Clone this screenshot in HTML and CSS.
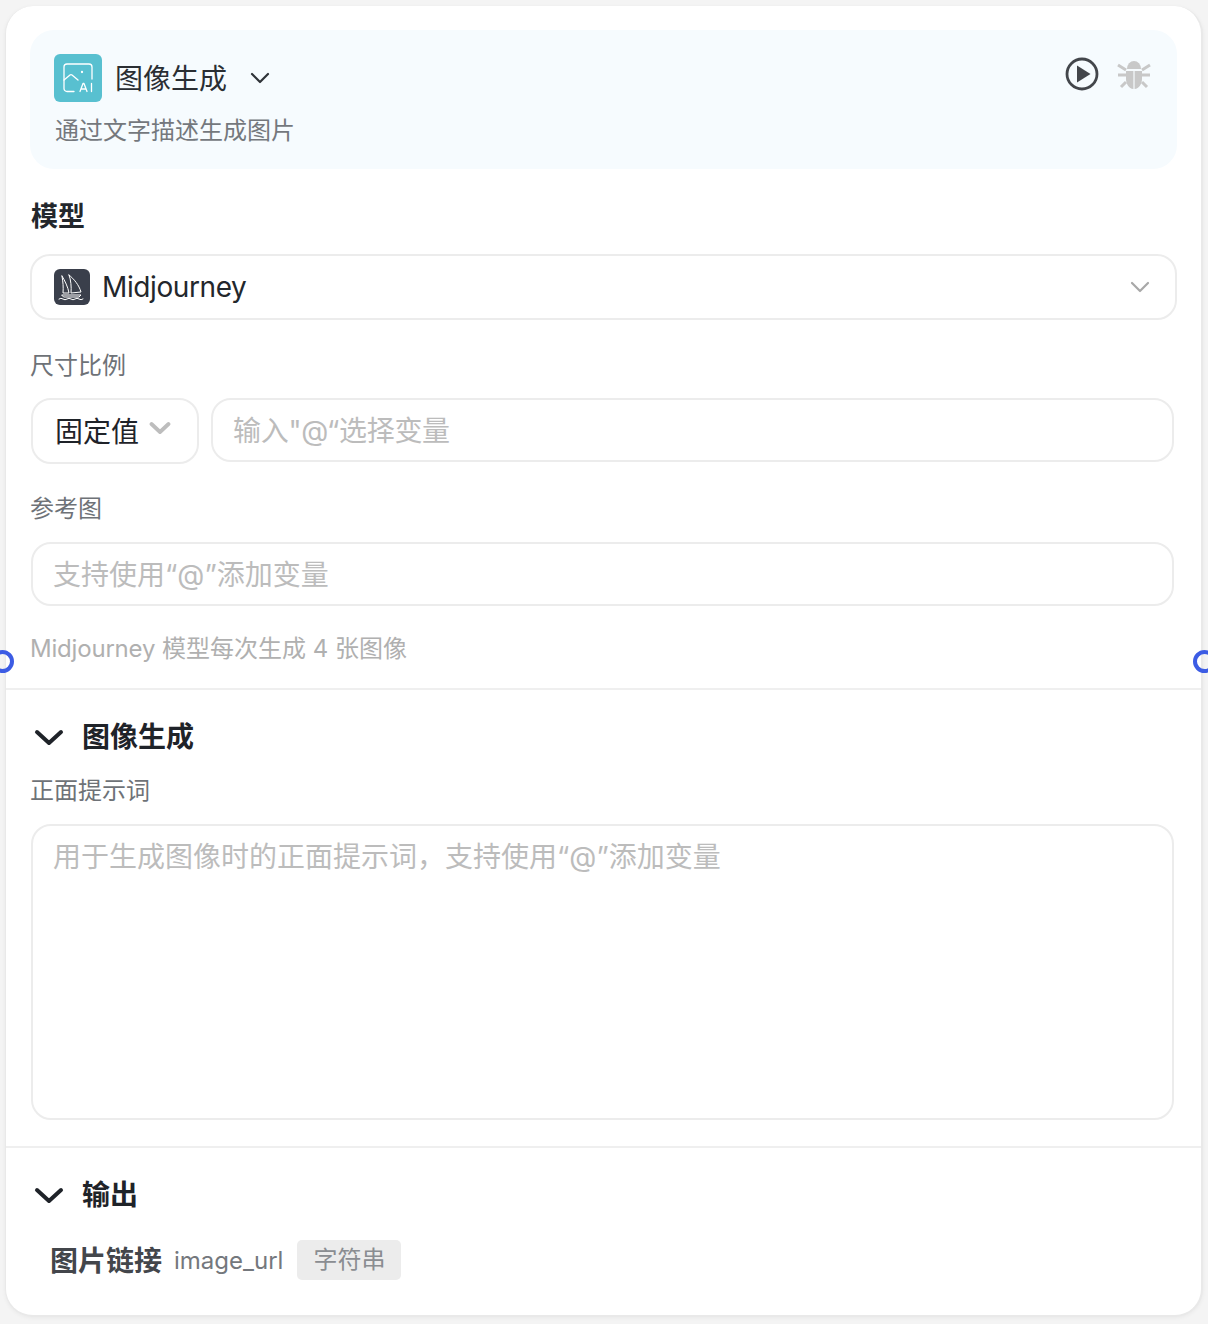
FILE: index.html
```html
<!DOCTYPE html>
<html lang="zh-CN">
<head>
<meta charset="utf-8">
<title>图像生成</title>
<link rel="stylesheet" href="styles.css">
</head>
<body>
<div class="card">
  <span class="handle handle-left"></span>
  <span class="handle handle-right"></span>
  <section class="top">
    <header class="head">
      <div class="head-main">
        <div class="head-title">
          <span class="node-icon">
            <svg width="30" height="30" viewBox="0 0 30 30" fill="none" stroke="#fff" stroke-width="1.300" stroke-linecap="round" stroke-linejoin="round">
              <path d="M11 28.500H4a3 3 0 0 1-3-3V4a3 3 0 0 1 3-3h22a3 3 0 0 1 3 3v12"/>
              <path d="M1 17l6-5q1-.7 2 0l6 5"/>
              <circle cx="19" cy="9" r=".5" fill="#fff"/>
              <path d="M17 28.500l3-8h1l3 8M18 26h5M28.500 20.500v8"/>
            </svg>
          </span>
          <span class="title">图像生成</span>
          <svg class="title-caret" width="20" height="20" viewBox="0 0 20 20" fill="none" stroke="#2f3338" stroke-width="2.200" stroke-linecap="round" stroke-linejoin="round"><path d="M2 6l8 8 8-8"/></svg>
        </div>
        <p class="desc">通过文字描述生成图片</p>
      </div>
      <div class="head-actions">
        <svg width="34" height="34" viewBox="0 0 34 34"><circle cx="17" cy="17" r="15" fill="none" stroke="#43464b" stroke-width="2.800"/><path d="M12 8.500v17l13.500-8.500z" fill="#43464b"/></svg>
        <svg width="34" height="34" viewBox="0 0 34 34" fill="#c8c8c8"><path d="M10 12a7 8 0 0 1 14 0z"/><path d="M9 14h7.400v18C12 31.500 9 27 9 22zM17.600 14H25v8c0 5-3 9.500-7.400 10z"/><path d="M1 8l8 5M33 8l-8 5M1 18h8M33 18h-8M4 30l5-5M30 30l-5-5" stroke="#c8c8c8" stroke-width="3" fill="none"/></svg>
      </div>
    </header>
    <h2 class="field-heading">模型</h2>
    <div class="select">
      <span class="model-icon">
        <svg width="36" height="36" viewBox="0 0 36 36" fill="none" stroke="#fff" stroke-width="1" stroke-linejoin="round" stroke-linecap="round">
          <path d="M8 7c3 5 6 11 7 17H9c.5-6 0-11-1-17z"/>
          <path d="M15 6c5 4 10 10 12 17l-10 1c.5-6 0-13-2-18z"/>
          <path d="M8 26h19l-2 2H10z"/>
          <path d="M5 30q2-1.500 4 0t4 0 4 0 4 0 4 0 4 0"/>
        </svg>
      </span>
      <span class="select-text">Midjourney</span>
      <svg class="select-caret" width="20" height="12" viewBox="0 0 20 12" fill="none" stroke="#a8a8a8" stroke-width="2.200" stroke-linecap="round" stroke-linejoin="round"><path d="M2 2l8 8 8-8"/></svg>
    </div>
    <label class="field-label ratio-label">尺寸比例</label>
    <div class="ratio-row">
      <div class="fixed-select">
        <span>固定值</span>
        <svg width="22" height="14" viewBox="0 0 22 14" fill="none" stroke="#bdbdbd" stroke-width="3.800" stroke-linecap="round" stroke-linejoin="round"><path d="M2.500 3l8.500 8 8.500-8"/></svg>
      </div>
      <div class="input grow">输入"@“选择变量</div>
    </div>
    <label class="field-label ref-label">参考图</label>
    <div class="input">支持使用“@”添加变量</div>
    <p class="hint"><span class="hint-latin">Midjourney</span> 模型每次生成 4 张图像</p>
  </section>
  <section class="section gen">
    <div class="section-head">
      <svg width="30" height="20" viewBox="0 0 30 20" fill="none" stroke="#1f2329" stroke-width="4" stroke-linecap="round" stroke-linejoin="round"><path d="M3 5l12 11L27 5"/></svg>
      <h3>图像生成</h3>
    </div>
    <label class="field-label prompt-label">正面提示词</label>
    <div class="input textarea">用于生成图像时的正面提示词，支持使用“@”添加变量</div>
  </section>
  <section class="section out">
    <div class="section-head">
      <svg width="30" height="20" viewBox="0 0 30 20" fill="none" stroke="#1f2329" stroke-width="4" stroke-linecap="round" stroke-linejoin="round"><path d="M3 5l12 11L27 5"/></svg>
      <h3>输出</h3>
    </div>
    <div class="output-row">
      <strong>图片链接</strong>
      <span class="var-name">image_url</span>
      <span class="tag">字符串</span>
    </div>
  </section>
</div>
</body>
</html>
```
FILE: styles.css
```css
* { box-sizing: border-box; }
html, body { margin: 0; padding: 0; }
body {
  width: 1208px;
  height: 1324px;
  overflow: hidden;
  background: #f4f4f4;
  padding: 6px 5px 0;
  font-family: Inter, "Noto Sans CJK SC", sans-serif;
  color: #1f2329;
}
h2, h3, p { margin: 0; }
.card {
  position: relative;
  width: 1198px;
  height: 1311px;
  background: #fff;
  border-radius: 28px;
  border: 1px solid #e9e9e9;
  border-width: 0 2px 2px 1px;
  box-shadow: 0 1px 4px rgba(0, 0, 0, .05);
}
.handle {
  position: absolute;
  top: 644px;
  width: 23px;
  height: 23px;
  border: 4px solid #3c5ce4;
  border-radius: 50%;
  background: transparent;
}
.handle-left { left: -15px; }
.handle-right { right: -15px; }
.top { padding: 24px 24px 0; height: 684px; border-bottom: 2px solid #efefef; }
.head {
  display: flex;
  justify-content: space-between;
  height: 139px;
  width: 1147px;
  padding: 24px 26px 0 24px;
  background: #f6fbfe;
  border-radius: 24px;
}
.head-title { display: flex; align-items: center; height: 48px; }
.node-icon {
  width: 48px;
  height: 48px;
  border-radius: 6px;
  background: #58c0d0;
  display: flex;
  align-items: center;
  justify-content: center;
  margin-right: 13px;
}
.title { font-size: 28px; line-height: 48px; color: #2a2e33; padding-top: 2px; }
.title-caret { margin-left: 23px; }
.desc { font-size: 24px; line-height: 36px; color: #74787d; margin: 11px 0 0 1px; }
.head-actions { display: flex; gap: 18px; height: 40px; align-items: flex-start; padding-top: 3px; }
.field-heading { font-size: 27px; line-height: 40px; font-weight: 700; margin: 28px 0 0 1px; color: #23272c; }
.select {
  display: flex;
  align-items: center;
  width: 1147px;
  height: 66px;
  margin-top: 17px;
  padding: 0 24px;
  border: 2px solid #ececec;
  border-radius: 20px;
}
.model-icon {
  width: 36px;
  height: 36px;
  border-radius: 6px;
  background: #3a3f4b;
  display: flex;
  align-items: center;
  justify-content: center;
  margin-right: 12px;
  margin-left: -2px;
}
.select-text { font-size: 28px; color: #23272c; letter-spacing: -.4px; }
.select-caret { margin-left: auto; margin-right: 1px; }
.field-label { display: block; font-size: 24px; line-height: 32px; color: #6e7277; }
.ratio-label { margin-top: 30px; }
.ratio-row { display: flex; gap: 12px; align-items: flex-start; width: 1143px; margin-top: 16px; margin-left: 1px; }
.fixed-select {
  display: flex;
  align-items: flex-start;
  gap: 10px;
  width: 168px;
  height: 66px;
  padding: 12px 0 0 22px;
  border: 2px solid #ececec;
  border-radius: 20px;
  font-size: 28px;
  line-height: 40px;
}
.fixed-select svg { margin-top: 9px; }
.input {
  height: 64px;
  border: 2px solid #ececec;
  border-radius: 20px;
  padding: 11px 20px;
  font-size: 28px;
  line-height: 40px;
  color: #bcbcbc;
  width: 1143px;
  margin-left: 1px;
}
.input.grow { width: auto; flex: 1; margin-left: 0; padding-left: 20px; letter-spacing: -.3px; }
.ref-label { margin-top: 29px; }
.ref-label + .input { margin-top: 17px; }
.hint { font-size: 24px; line-height: 32px; color: #b0b0b0; margin-top: 27px; }
.hint-latin { letter-spacing: -.2px; }
.section { padding: 0 24px; }
.gen { height: 458px; border-bottom: 2px solid #efefef; padding-top: 27px; }
.section-head { display: flex; align-items: center; gap: 18px; height: 40px; margin-left: 6px; }
.section-head h3 { font-size: 28px; font-weight: 700; line-height: 40px; color: #1f2329; }
.section-head svg { margin-left: -2px; }
.prompt-label { margin-top: 18px; }
.textarea { height: 296px; margin-top: 17px; padding-top: 11px; }
.out { padding-top: 27px; }
.output-row { display: flex; align-items: center; margin-top: 25px; margin-left: 20px; height: 40px; }
.output-row strong { font-size: 28px; line-height: 40px; font-weight: 700; color: #43464b; padding-top: 1px; }
.var-name { font-size: 24px; color: #74787d; margin-left: 12px; }
.tag {
  font-size: 24px;
  line-height: 40px;
  height: 40px;
  padding: 0 16px;
  margin-left: 14px;
  border-radius: 5px;
  background: #ececec;
  color: #8a8d91;
}
```
